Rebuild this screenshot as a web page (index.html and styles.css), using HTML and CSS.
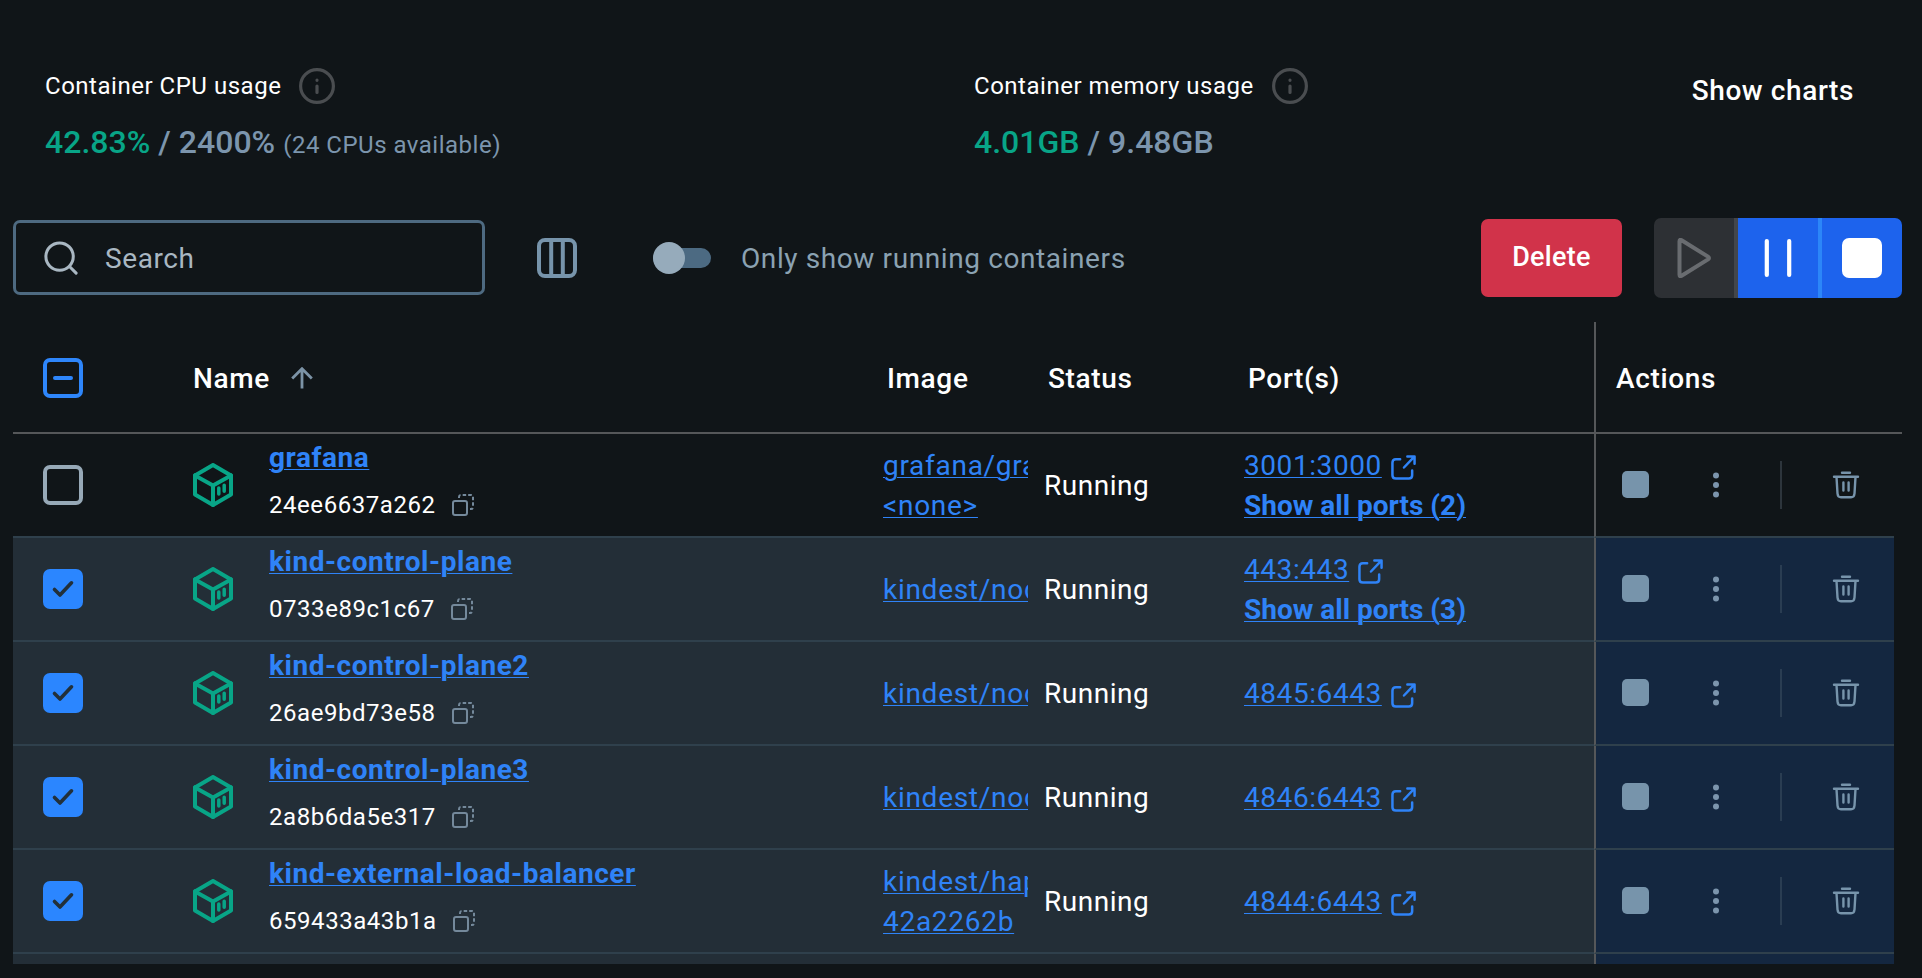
FILE: index.html
```html
<!DOCTYPE html>
<html lang="en">
<head>
<meta charset="utf-8">
<title>Containers</title>
<link rel="stylesheet" href="styles.css">
</head>
<body>
<svg class="defs" width="0" height="0">
  <symbol id="info" viewBox="0 0 36 36"><g fill="none" stroke="currentColor" stroke-width="3.2" stroke-linecap="round"><circle cx="18" cy="18" r="16.4"/><path d="M18 18v6.5M18 12.2v.1"/></g></symbol>
  <symbol id="cube" viewBox="0 0 40 44"><g fill="none" stroke="currentColor" stroke-width="4" stroke-linejoin="round" stroke-linecap="round"><path d="M20 2 38 12.4V31.6L20 42 2 31.6V12.4Z"/><path d="M2 12.4 20 22.4 38 12.4M20 22.4V42"/><path d="M25.800 25v6M31.200 22.300v6" stroke-width="3.500"/></g></symbol>
  <symbol id="copy" viewBox="0 0 24 24"><g fill="none" stroke="currentColor" stroke-width="2"><rect x="2" y="8" width="14" height="14" rx="2"/><path d="M8 5V4Q8 2 10 2H20Q22 2 22 4V14Q22 16 20 16H19" stroke-dasharray="3.500 2"/></g></symbol>
  <symbol id="ext" viewBox="0 0 26 26"><g fill="none" stroke="currentColor" stroke-width="2.6" stroke-linecap="round" stroke-linejoin="round"><path d="M9.500 4.500H5Q1.500 4.500 1.500 8V21Q1.500 24.500 5 24.500H18.500Q22 24.500 22 21V16"/><path d="M13.500 13 24 2M17 1.500H24.500V9"/></g></symbol>
  <symbol id="dots" viewBox="0 0 8 26"><g fill="currentColor"><circle cx="4" cy="3.600" r="3"/><circle cx="4" cy="13" r="3"/><circle cx="4" cy="22.400" r="3"/></g></symbol>
  <symbol id="trash" viewBox="0 0 28 28"><g fill="none" stroke="currentColor" stroke-width="2.4" stroke-linecap="round" stroke-linejoin="round"><path d="M10 1.700h8M2 5.800h24M4.500 6l1 16.500Q5.800 26.300 9 26.300h10q3.200 0 3.500-3.800L23.500 6M11.400 11.500v8M16.600 11.500v8"/></g></symbol>
  <symbol id="check" viewBox="0 0 24 24"><path d="M3.500 12.500 9 18 20.500 5.800" fill="none" stroke="currentColor" stroke-width="3.600" stroke-linecap="round" stroke-linejoin="round"/></symbol>
</svg>

<section class="stats">
  <div class="stat cpu">
    <div class="stat-label">Container CPU usage <svg class="info"><use href="#info"/></svg></div>
    <div class="stat-value"><b>42.83%</b> / 2400% <small>(24 CPUs available)</small></div>
  </div>
  <div class="stat mem">
    <div class="stat-label">Container memory usage <svg class="info"><use href="#info"/></svg></div>
    <div class="stat-value"><b>4.01GB</b> / 9.48GB</div>
  </div>
  <div class="show-charts">Show charts</div>
</section>

<section class="toolbar">
  <div class="search">
    <svg viewBox="0 0 36 36"><g fill="none" stroke="currentColor" stroke-width="3.200" stroke-linecap="round"><circle cx="16.500" cy="16.500" r="14.500"/><path d="m27 27 7 7"/></g></svg>
    <span>Search</span>
  </div>
  <svg class="columns" viewBox="0 0 40 40"><g fill="none" stroke="currentColor" stroke-width="4"><rect x="2" y="2" width="36" height="36" rx="6"/><path d="M14.200 2v36M25.800 2v36"/></g></svg>
  <div class="switch"><i></i></div>
  <span class="switch-label">Only show running containers</span>
  <button class="delete">Delete</button>
  <div class="group">
    <div class="seg off"><svg viewBox="0 0 40 40"><path d="M5.500 3.200Q5.500 1 7.600 2.300L34 18.600Q36 20 34 21.400L7.600 37.700Q5.500 39 5.500 36.800Z" fill="none" stroke="currentColor" stroke-width="4"/></svg></div>
    <div class="seg"><svg viewBox="0 0 40 40"><path d="M8.800 3v34M31.200 3v34" stroke="currentColor" stroke-width="4.200" stroke-linecap="round"/></svg></div>
    <div class="seg"><span class="stop"></span></div>
  </div>
</section>

<section class="table">
  <div class="row head">
    <div class="c-check"><span class="box some"></span></div>
    <div class="c-name">Name <svg class="arrow" viewBox="0 0 22 22"><path d="M11 21.500V2M1.200 11.500 11 1.700l9.800 9.800" fill="none" stroke="currentColor" stroke-width="2.800"/></svg></div>
    <div class="c-image">Image</div>
    <div class="c-status">Status</div>
    <div class="c-ports">Port(s)</div>
    <div class="c-actions">Actions</div>
  </div>
  <div id="rows"></div>
</section>
<script src="rows.js"></script>
</body>
</html>
```
FILE: styles.css
```css
* { box-sizing: border-box; }
body { margin: 0; width: 1922px; height: 978px; overflow: hidden; background: #101518; color: #fff; font: 28px/40px Roboto, sans-serif; letter-spacing: .52px; }
svg { display: block; flex: none; }
.defs { position: absolute; }

.stats { display: flex; height: 218px; padding: 68px 68px 0 45px; }
.stat { height: 100px; }
.cpu { width: 929px; }
.mem { flex: 1; }
.stat-label { display: flex; align-items: center; gap: 18px; height: 36px; font-size: 24px; letter-spacing: .52px; }
.info { width: 36px; height: 36px; color: #4a4d50; }
.stat-value { margin-top: 17px; font-size: 32px; line-height: 42px; font-weight: 500; letter-spacing: .02px; color: #7c95ad; white-space: nowrap; }
.stat-value b { font-weight: 500; color: #08a587; }
.stat-value small { font-size: 24px; font-weight: 400; letter-spacing: .5px; }
.show-charts { margin-top: 3px; font-weight: 500; letter-spacing: .6px; }

.toolbar { display: flex; align-items: center; height: 80px; padding: 0 20px 0 13px; }
.search { display: flex; align-items: center; gap: 27px; width: 472px; height: 75px; margin-top: -1px; padding-left: 28px; border: 3px solid #4e6a81; border-radius: 7px; color: #a9b7c2; letter-spacing: .6px; }
.search svg { width: 34px; height: 34px; }
.search span { padding-top: 2px; }
.columns { width: 40px; height: 40px; margin-left: 52px; color: #7794ab; }
.switch { display: flex; align-items: center; width: 58px; height: 20px; margin-left: 76px; margin-right: 30px; border-radius: 10px; background: #4c6a82; }
.switch i { flex: none; width: 32px; height: 32px; border-radius: 50%; background: #96abbb; }
.switch-label { padding-top: 2px; color: #8ba2b2; letter-spacing: .6px; white-space: nowrap; }
.delete { width: 141px; height: 78px; margin-left: auto; margin-right: 32px; padding: 0 0 2px; border: 0; border-radius: 7px; background: #d1334a; color: #fff; font: 500 27px Roboto, sans-serif; letter-spacing: .3px; }
.group { display: flex; width: 248px; height: 80px; border-radius: 7px; overflow: hidden; }
.seg { display: flex; align-items: center; justify-content: center; width: 84px; background: #1d63ed; border-right: 4px solid #2c86f8; }
.seg svg { width: 40px; height: 40px; }
.seg.off { background: #2d3034; color: #696c70; border-color: #43464a; }
.seg:last-child { width: 80px; border: 0; }
.stop { width: 40px; height: 40px; border-radius: 7px; background: #fff; }

.table { height: 642px; margin-top: 24px; margin-left: 13px; width: 1889px; overflow: hidden; }
.row { display: grid; grid-template-columns: 180px 690px 161px 200px 350px 300px; width: 1881px; height: 104px; border-bottom: 2px solid #2f404c; }
.row > div { display: flex; align-items: center; min-width: 0; }
.head { width: 1889px; height: 112px; border-color: #555759; font-weight: 500; letter-spacing: .65px; }
.head > div { padding-top: 3px; }
.head > .c-check { padding-top: 2px; }
.row > .c-check { padding-left: 30px; }
.row > .c-actions { border-left: 2px solid #555759; padding-left: 26px; margin-bottom: -2px; border-bottom: 2px solid #2f404c; }
.head > .c-actions { padding-left: 20px; border-bottom-color: #555759; }
.head > .c-image, .head > .c-status, .head > .c-ports { padding-left: 4px; }
.arrow { width: 22px; height: 22px; margin-left: 21px; margin-top: -1px; color: #7c93a6; }
.box { display: flex; align-items: center; justify-content: center; width: 40px; height: 40px; border: 4px solid #97a9b7; border-radius: 7px; }
.box.some { border-color: #2e86fb; }
.box.some::after { content: ""; width: 20px; height: 4px; border-radius: 2px; background: #2e86fb; }
.checked .box { border: 0; background: #2b86ff; color: #22303a; }
.box svg { width: 24px; height: 24px; }
.checked { background: #232e37; }
.checked .c-actions { background: #142740; }
.cube { width: 40px; height: 44px; color: #08a587; margin-right: 36px; }
.nm { display: flex; flex-direction: column; height: 100%; }
a { color: #2f83f7; text-decoration: underline; text-decoration-thickness: 1px; text-underline-offset: 2px; white-space: nowrap; }
.nm a { margin-top: 4px; font-weight: 700; height: 40px; letter-spacing: .55px; }
.id { display: flex; align-items: center; gap: 15px; margin-top: 7px; height: 40px; font-size: 24px; letter-spacing: .55px; }
.id svg { width: 24px; height: 24px; color: #74899b; }
.row > .c-status.cell { padding-top: 1px; }
.row > .c-image.cell { flex-direction: column; align-items: flex-start; justify-content: center; overflow: hidden; width: 145px; padding-top: 2px; letter-spacing: .72px; }
.row > .c-ports.cell { flex-direction: column; align-items: flex-start; justify-content: center; padding-top: 2px; }
.port { display: flex; gap: 9px; align-items: center; letter-spacing: .57px; }
.port svg { width: 25px; height: 25px; margin-top: 2px; color: #2f83f7; }
.all { font-weight: 700; letter-spacing: 0; }
.sq { width: 27px; height: 27px; margin-top: -1px; border-radius: 5px; background: #7794ab; }
.dots { width: 8px; height: 26px; margin-left: 63px; color: #7c95ad; }
.sep { width: 2px; height: 48px; margin-left: 60px; background: #2d353c; }
.trash { width: 28px; height: 28px; margin-left: 50px; color: #7794ab; }
.checked .sep { background: #2a3d52; }
```
FILE: rows.js
```javascript
const rows = [
  { name: "grafana", id: "24ee6637a262", image: ["grafana/gra", "<none>"], port: "3001:3000", more: 2 },
  { name: "kind-control-plane", id: "0733e89c1c67", image: ["kindest/nod"], port: "443:443", more: 3, on: true },
  { name: "kind-control-plane2", id: "26ae9bd73e58", image: ["kindest/nod"], port: "4845:6443", on: true },
  { name: "kind-control-plane3", id: "2a8b6da5e317", image: ["kindest/nod"], port: "4846:6443", on: true },
  { name: "kind-external-load-balancer", id: "659433a43b1a", image: ["kindest/hap", "42a2262b"], port: "4844:6443", on: true }
];
const icon = (id, cls) => `<svg class="${cls || id}"><use href="#${id}"/></svg>`;
const esc = s => s.replace(/</g, "&lt;").replace(/>/g, "&gt;");
document.getElementById("rows").innerHTML = rows.map(r => `
  <div class="row ${r.on ? "checked" : ""}">
    <div class="c-check"><span class="box">${r.on ? icon("check") : ""}</span></div>
    <div class="c-name">${icon("cube")}<div class="nm"><a>${r.name}</a><div class="id">${r.id}${icon("copy")}</div></div></div>
    <div class="c-image cell">${r.image.map(i => `<a>${esc(i)}</a>`).join("")}</div>
    <div class="c-status cell">Running</div>
    <div class="c-ports cell"><div class="port"><a>${r.port}</a>${icon("ext")}</div>${r.more ? `<a class="all">Show all ports (${r.more})</a>` : ""}</div>
    <div class="c-actions"><span class="sq"></span>${icon("dots")}<span class="sep"></span>${icon("trash")}</div>
  </div>`).join("") + `<div class="row checked"><div></div><div></div><div></div><div></div><div></div><div class="c-actions"></div></div>`;
```
